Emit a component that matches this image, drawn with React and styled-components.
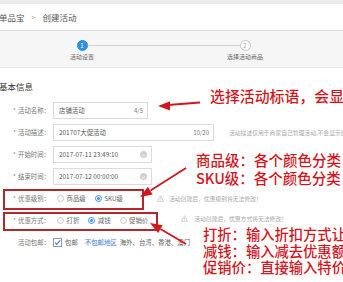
import React from "react";
import styled, { createGlobalStyle } from "styled-components";

const Global = createGlobalStyle`
  html, body { margin: 0; padding: 0; background: #fff; }
  body { font-family: "Noto Sans CJK SC", "Noto Sans", sans-serif; }
  * { box-sizing: border-box; }
`;

const Page = styled.div`
  position: relative;
  width: 343px;
  height: 282px;
  overflow: hidden;
  background: #fff;
`;

const TopStrip = styled.div`
  height: 4px;
  background: #ececec;
`;

const Breadcrumb = styled.div`
  height: 27px;
  display: flex;
  align-items: center;
  gap: 7px;
  margin-left: -1px;
  font-size: 8.5px;
  color: #555;
  border-bottom: 1px solid #e0e0e0;
`;

const Sep = styled.span`
  color: #aaa;
  font-size: 7px;
`;

const Steps = styled.div`
  height: 37px;
  background: #f6f6f6;
  border-bottom: 1px solid #e6e6e6;
  display: flex;
  align-items: flex-start;
  padding: 9px 0 0 62px;
`;

const Step = styled.div`
  width: 40px;
  display: flex;
  flex-direction: column;
  align-items: center;
  position: relative;
  z-index: 1;
`;

const Circle = styled.div`
  width: 11px;
  height: 11px;
  border-radius: 50%;
  display: flex;
  align-items: center;
  justify-content: center;
  font-size: 6px;
  line-height: 1;
  background: ${(p) => (p.$active ? "#2d8fe6" : "#fff")};
  border: 1px solid ${(p) => (p.$active ? "#2d8fe6" : "#c8c8c8")};
  color: ${(p) => (p.$active ? "#fff" : "#aaa")};
`;

const StepLabel = styled.div`
  margin-top: 2px;
  font-size: 6px;
  line-height: 8px;
  color: #666;
  white-space: nowrap;
`;

const Connector = styled.div`
  width: 152px;
  height: 1px;
  margin: 5px -15px 0 -14px;
  background: #d2d2d2;
`;

const SectionTitle = styled.div`
  margin-top: 12px;
  margin-left: -1px;
  font-size: 8.5px;
  line-height: 12px;
  color: #333;
`;

const Form = styled.div`
  margin-top: 10px;
  display: flex;
  flex-direction: column;
  gap: 5px;
`;

const Row = styled.div`
  display: grid;
  grid-template-columns: 50px 1fr;
  align-items: center;
  height: 17px;
`;

const Label = styled.div`
  text-align: right;
  font-size: 6.4px;
  color: #777;
  white-space: nowrap;
`;

const Star = styled.span`
  color: #c77;
  margin-right: 2px;
`;

const Field = styled.div`
  display: flex;
  align-items: center;
  margin-left: 3px;
  height: 17px;
  white-space: nowrap;
`;

const Input = styled.div`
  width: ${(p) => p.$w}px;
  height: 17px;
  border: 1px solid #dcdcdc;
  display: flex;
  align-items: center;
  justify-content: space-between;
  padding: 0 4px 0 5px;
  font-size: 6.4px;
  color: #555;
  background: #fff;
`;

const Counter = styled.span`
  font-size: 6px;
  color: #777;
`;

const ClearIcon = styled.span`
  width: 7px;
  height: 7px;
  border-radius: 50%;
  background: #cfcfcf;
  color: #fff;
  font-size: 5px;
  line-height: 7px;
  text-align: center;
`;

const Note = styled.span`
  margin-left: ${(p) => p.$ml || 15}px;
  font-size: 5.8px;
  color: #a8a8a8;
`;

const RadioGroup = styled.div`
  display: flex;
  align-items: center;
  gap: 9px;
  padding-left: 4px;
`;

const RadioItem = styled.label`
  display: flex;
  align-items: center;
  gap: 2.5px;
  font-size: 6.4px;
  color: #666;
`;

const RadioDot = styled.span`
  width: 7px;
  height: 7px;
  border-radius: 50%;
  border: 1px solid ${(p) => (p.$on ? "#3a8ee6" : "#c8c8c8")};
  display: flex;
  align-items: center;
  justify-content: center;
  &::after {
    content: "";
    width: 3px;
    height: 3px;
    border-radius: 50%;
    background: ${(p) => (p.$on ? "#3a8ee6" : "transparent")};
  }
`;

const Warn = styled.div`
  display: flex;
  align-items: center;
  margin-left: ${(p) => p.$ml}px;
  margin-top: ${(p) => p.$mt || 0}px;
`;

const CheckBox = styled.span`
  width: 9px;
  height: 9px;
  border: 1px solid #8a9bb0;
  display: flex;
  align-items: center;
  justify-content: center;
  margin-right: 3px;
`;

const Plain = styled.span`
  font-size: 6.4px;
  color: ${(p) => p.$color || "#666"};
  margin-left: ${(p) => p.$ml || 0}px;
`;

const AnnoBox = styled.div`
  position: absolute;
  left: ${(p) => p.$x}px;
  top: ${(p) => p.$y}px;
  width: ${(p) => p.$w}px;
  height: ${(p) => p.$h}px;
  border: 2px solid #b3262b;
  pointer-events: none;
`;

const AnnoText = styled.div`
  position: absolute;
  left: ${(p) => p.$x}px;
  top: ${(p) => p.$y}px;
  font-size: ${(p) => p.$fs || 14.5}px;
  line-height: ${(p) => p.$lh}px;
  font-weight: 500;
  color: #d2161d;
  white-space: nowrap;
`;

const ArrowLayer = styled.svg`
  position: absolute;
  left: 0;
  top: 0;
  pointer-events: none;
`;

function WarnIcon() {
  return (
    <svg width="7" height="7" viewBox="0 0 10 10">
      <path d="M5 1 L9.3 9 L0.7 9 Z" fill="none" stroke="#b8b8b8" strokeWidth="0.9" strokeLinejoin="round" />
      <path d="M5 3.8 V6.3" stroke="#b8b8b8" strokeWidth="0.9" />
      <circle cx="5" cy="7.6" r="0.5" fill="#b8b8b8" />
    </svg>
  );
}

function Radio({ on, children }) {
  return (
    <RadioItem>
      <RadioDot $on={on} />
      {children}
    </RadioItem>
  );
}

export default function App() {
  return (
    <Page>
      <Global />
      <TopStrip />
      <Breadcrumb>
        <span>单品宝</span>
        <Sep>&gt;</Sep>
        <span>创建活动</span>
      </Breadcrumb>
      <Steps>
        <Step>
          <Circle $active>1</Circle>
          <StepLabel>活动设置</StepLabel>
        </Step>
        <Connector />
        <Step>
          <Circle>2</Circle>
          <StepLabel>选择活动商品</StepLabel>
        </Step>
      </Steps>
      <SectionTitle>基本信息</SectionTitle>
      <Form>
        <Row>
          <Label><Star>*</Star>活动名称：</Label>
          <Field>
            <Input $w={95}>
              <span>店铺活动</span>
              <Counter>4/5</Counter>
            </Input>
          </Field>
        </Row>
        <Row>
          <Label><Star>*</Star>活动描述：</Label>
          <Field>
            <Input $w={161}>
              <span>201707大促活动</span>
              <Counter>10/20</Counter>
            </Input>
            <Note>活动描述仅用于商家自己管理活动,不会显示给消费者</Note>
          </Field>
        </Row>
        <Row>
          <Label><Star>*</Star>开始时间：</Label>
          <Field>
            <Input $w={99}>
              <span>2017-07-11 23:49:10</span>
              <ClearIcon>×</ClearIcon>
            </Input>
          </Field>
        </Row>
        <Row>
          <Label><Star>*</Star>结束时间：</Label>
          <Field>
            <Input $w={99}>
              <span>2017-07-12 00:00:00</span>
              <ClearIcon>×</ClearIcon>
            </Input>
          </Field>
        </Row>
        <Row>
          <Label><Star>*</Star>优惠级别：</Label>
          <Field>
            <RadioGroup>
              <Radio>商品级</Radio>
              <Radio on>SKU级</Radio>
            </RadioGroup>
            <Warn $ml={34}>
              <WarnIcon />
              <Note $ml={5}>活动创建后，优惠级别将无法修改！</Note>
            </Warn>
          </Field>
        </Row>
        <Row>
          <Label><Star>*</Star>优惠方式：</Label>
          <Field>
            <RadioGroup>
              <Radio>打折</Radio>
              <Radio on>减钱</Radio>
              <Radio>促销价</Radio>
            </RadioGroup>
            <Warn $ml={33} $mt={-5}>
              <WarnIcon />
              <Note $ml={6}>活动创建后，优惠方式将无法修改！</Note>
            </Warn>
          </Field>
        </Row>
        <Row>
          <Label>活动包邮：</Label>
          <Field>
            <CheckBox>
              <svg width="7" height="7" viewBox="0 0 10 10">
                <path d="M1.5 5.2 L4 7.8 L8.8 2" fill="none" stroke="#3a7fd5" strokeWidth="1.6" />
              </svg>
            </CheckBox>
            <Plain>包邮</Plain>
            <Plain $color="#3b78d0" $ml={7}>不包邮地区</Plain>
            <Plain $ml={3}>海外、台湾、香港、澳门</Plain>
          </Field>
        </Row>
      </Form>

      <AnnoBox $x={3} $y={189} $w={141} $h={21} />
      <AnnoBox $x={3} $y={212} $w={155} $h={19} />

      <AnnoText $x={210} $y={86} $lh={20} $fs={14.9}>选择活动标语，会显示</AnnoText>
      <AnnoText $x={196} $y={151} $lh={18}>
        商品级：各个颜色分类
        <br />
        SKU级：各个颜色分类
      </AnnoText>
      <AnnoText $x={203} $y={226} $lh={16.5} $fs={14.3}>
        打折：输入折扣方式让
        <br />
        减钱：输入减去优惠额
        <br />
        促销价：直接输入特价
      </AnnoText>

      <ArrowLayer width="343" height="282" viewBox="0 0 343 282">
        <g stroke="#d2161d" strokeWidth="1.8" fill="#d2161d">
          <line x1="200" y1="102.5" x2="168" y2="105" />
          <polygon points="158,106 170,101.2 170,110.4" stroke="none" />
          <line x1="186" y1="168" x2="150.5" y2="190.4" />
          <polygon points="140,197 152.6,194.4 147.8,186.8" stroke="none" />
          <line x1="186" y1="244" x2="160.5" y2="229" />
          <polygon points="150,223 162.6,225.2 158.1,232.9" stroke="none" />
        </g>
      </ArrowLayer>
    </Page>
  );
}
